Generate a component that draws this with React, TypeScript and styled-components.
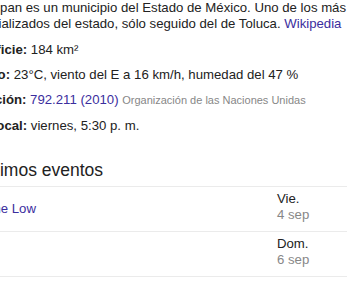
import * as React from 'react'
import styled, {createGlobalStyle} from 'styled-components'

const GlobalStyle = createGlobalStyle`
  html, body {
    margin: 0;
    padding: 0;
    background: #fff;
    overflow: hidden;
  }
  body {
    font-family: 'Liberation Sans', Arial, Helvetica, sans-serif;
    color: #222;
  }
`

const StyledPanel = styled.div`
  width: 347px;
  height: 283px;
  overflow: hidden;
`

const StyledPanelInner = styled.div`
  margin-left: -41px;
  width: 388px;
`

const StyledDescription = styled.p`
  margin: 0;
  font-size: 13.2px;
  line-height: 16px;
  white-space: nowrap;
`

const StyledLink = styled.a`
  color: #3b2e9e;
  text-decoration: none;
`

const StyledFactList = styled.ul`
  list-style: none;
  margin: 5px 0 0;
  padding: 0;
`

const StyledFact = styled.li`
  font-size: 13.2px;
  line-height: 25px;
  white-space: nowrap;

  b {
    font-weight: bold;
  }
`

const StyledSource = styled.span`
  color: #878787;
  font-size: 11px;
`

const StyledHeading = styled.h2`
  margin: 20px 0 0;
  padding: 0 0 4px 5px;
  font-size: 17.5px;
  font-weight: normal;
  line-height: 24px;
  border-bottom: 1px solid #ebebeb;
`

const StyledEventList = styled.ul`
  list-style: none;
  margin: 0;
  padding: 0;
`

const StyledEventRow = styled.li`
  display: flex;
  align-items: center;
  height: 44px;
  border-bottom: 1px solid #ebebeb;
  font-size: 13.2px;
  line-height: 16px;
`

const StyledEventTitle = styled.a`
  flex: 1;
  color: #3b2e9e;
  text-decoration: none;
`

const StyledEventDate = styled.div`
  width: 70px;
  align-self: flex-start;
  padding-top: 4px;
  color: #222;

  span {
    display: block;
    color: #878787;
  }
`

const events = [
  {title: 'Caroline Low', day: 'Vie.', date: '4 sep'},
  {title: 'Jumbo', day: 'Dom.', date: '6 sep'},
  {title: 'Festival Vive Latino', day: 'Vie.', date: '11 sep'},
]

const App = () => {
  return (
    <StyledPanel>
      <GlobalStyle />
      <StyledPanelInner>
        <StyledDescription>
          Naucalpan es un municipio del Estado de México. Uno de los más
          <br />
          industrializados del estado, sólo seguido del de Toluca.{' '}
          <StyledLink href="#">Wikipedia</StyledLink>
        </StyledDescription>

        <StyledFactList>
          <StyledFact>
            <b>Superficie:</b> 184 km²
          </StyledFact>
          <StyledFact>
            <b>Tiempo:</b> 23°C, viento del E a 16 km/h, humedad del 47 %
          </StyledFact>
          <StyledFact>
            <b>Población:</b> <StyledLink href="#">792.211 (2010)</StyledLink>{' '}
            <StyledSource>Organización de las Naciones Unidas</StyledSource>
          </StyledFact>
          <StyledFact>
            <b>Hora local:</b> viernes, 5:30 p. m.
          </StyledFact>
        </StyledFactList>

        <StyledHeading>Próximos eventos</StyledHeading>
        <StyledEventList>
          {events.map((event) => (
            <StyledEventRow key={event.title}>
              <StyledEventTitle href="#">{event.title}</StyledEventTitle>
              <StyledEventDate>
                {event.day}
                <span>{event.date}</span>
              </StyledEventDate>
            </StyledEventRow>
          ))}
        </StyledEventList>
      </StyledPanelInner>
    </StyledPanel>
  )
}

export default App
